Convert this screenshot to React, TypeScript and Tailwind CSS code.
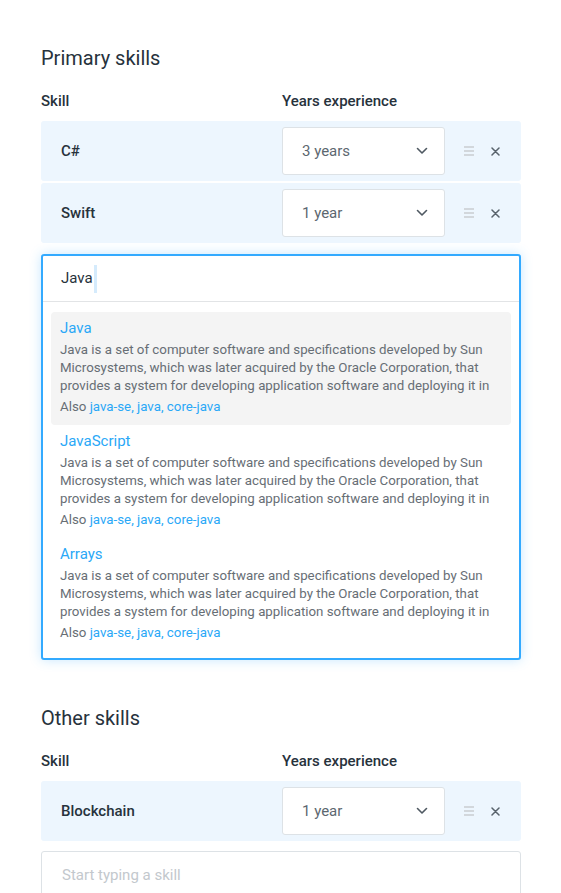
import { useState } from "react";

const DESC =
  "Java is a set of computer software and specifications developed by Sun Microsystems, which was later acquired by the Oracle Corporation, that provides a system for developing application software and deploying it in";

const Chevron = () => (
  <svg width="12" height="8" viewBox="0 0 12 8" fill="none">
    <path d="M1.5 1.5 6 6l4.5-4.5" stroke="#4f5962" strokeWidth="1.6" strokeLinecap="round" strokeLinejoin="round" />
  </svg>
);

const DragHandle = () => (
  <svg width="12" height="10" viewBox="0 0 12 10" fill="none">
    <path d="M1 1h10M1 5h10M1 9h10" stroke="#c9cdd1" strokeWidth="1.6" />
  </svg>
);

const Close = () => (
  <svg width="9" height="9" viewBox="0 0 9 9" fill="none">
    <path d="M1 1l7 7M8 1 1 8" stroke="#59636c" strokeWidth="1.5" strokeLinecap="round" />
  </svg>
);

const SkillRow = ({ name, years }: { name: string; years: string }) => (
  <div className="flex items-center h-[60px] rounded-[3px] bg-[#edf6fe]">
    <div className="w-[241px] pl-5 text-[15px] font-medium text-[#27323c]">{name}</div>
    <div className="flex items-center justify-between w-[163px] h-12 pl-[19px] pr-4 bg-white border border-[#dde2e6] rounded-[3px]">
      <span className="text-[15px] text-[#5c6770]">{years}</span>
      <Chevron />
    </div>
    <div className="flex items-center pl-[18px] gap-[16px]">
      <DragHandle />
      <Close />
    </div>
  </div>
);

const Labels = () => (
  <div className="flex text-[15px] font-medium text-[#27323c] leading-5 mt-[19px] mb-[10px]">
    <div className="w-[241px]">Skill</div>
    <div>Years experience</div>
  </div>
);

const results = [
  { title: "Java", active: true },
  { title: "JavaScript", active: false },
  { title: "Arrays", active: false },
];

const App = () => {
  const [query] = useState("Java");

  return (
    <div className="min-h-[893px] bg-white" style={{ fontFamily: "Roboto, 'Noto Sans', sans-serif" }}>
      <div className="w-[480px] ml-[41px] pt-[44px]">
        <h2 className="text-[20px] leading-7 text-[#27323c]">Primary skills</h2>
        <Labels />
        <div className="flex flex-col gap-[2px]">
          <SkillRow name="C#" years="3 years" />
          <SkillRow name="Swift" years="1 year" />
        </div>

        <div className="mt-[11px] border-2 border-[#33aaff] rounded-[3px] bg-white shadow-[0_0_12px_rgba(51,170,255,0.28)]">
          <div className="flex items-center h-[46px] pl-[18px] border-b border-[#e2e4e6]">
            <span className="text-[15px] text-[#27323c]">{query}</span>
            <span className="ml-[1px] w-[3px] h-[28px] bg-[#d5ebfc]" />
          </div>
          <div className="px-2 pt-[10px] pb-[7px]">
            {results.map((r) => (
              <div
                key={r.title}
                className={`rounded-[4px] px-[9px] pt-[6px] pb-[9px] ${r.active ? "bg-[#f4f4f4]" : ""}`}
              >
                <div className="text-[15px] leading-5 text-[#2aa8f7]">{r.title}</div>
                <p className="mt-[3px] max-h-[54px] overflow-hidden text-[13.3px] leading-[18px] text-[#676e75]">{DESC}</p>
                <div className="mt-[3px] text-[13.3px] leading-[18px] text-[#676e75]">
                  Also <span className="text-[#2aa8f7]">java-se, java, core-java</span>
                </div>
              </div>
            ))}
          </div>
        </div>

        <h2 className="mt-[44px] text-[20px] leading-7 text-[#27323c]">Other skills</h2>
        <Labels />
        <SkillRow name="Blockchain" years="1 year" />
        <div className="mt-[10px] flex items-center h-12 pl-5 border border-[#dde2e6] rounded-[3px]">
          <span className="text-[15px] text-[#c3c8cd]">Start typing a skill</span>
        </div>
      </div>
    </div>
  );
};

export default App;
